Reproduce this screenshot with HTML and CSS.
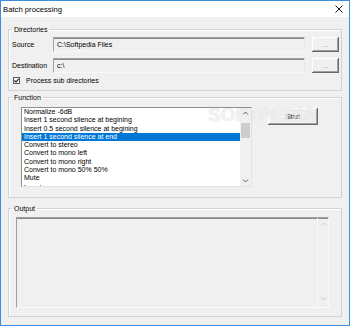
FILE: index.html
```html
<!DOCTYPE html>
<html lang="en">
<head>
    <meta charset="UTF-8">
    <title>Batch processing</title>
    <link rel="stylesheet" href="styles.css">
</head>
<body>
    <div class="window">
        <div class="titlebar">
            <span class="title">Batch processing</span>
            <svg class="close" width="8" height="8" viewBox="0 0 8 8">
                <path d="M0.5 0.5 L7.5 7.5 M7.5 0.5 L0.5 7.5" stroke="#111" stroke-width="1" fill="none"/>
            </svg>
        </div>
        <div class="client">
            <fieldset class="group">
                <legend>Directories</legend>
                <div class="dirs-body">
                    <div class="row">
                        <span class="lbl">Source</span>
                        <div class="edit">C:\Softpedia Files</div>
                        <button class="btn browse">...</button>
                    </div>
                    <div class="row">
                        <span class="lbl">Destination</span>
                        <div class="edit">c:\</div>
                        <button class="btn browse">...</button>
                    </div>
                    <div class="check-row">
                        <span class="checkbox">
                            <svg width="5" height="5" viewBox="0 0 5 5">
                                <path d="M0.5 2.5 L2 4 L4.6 0.8" stroke="#111" stroke-width="1.1" fill="none"/>
                            </svg>
                        </span>
                        <span>Process sub directories</span>
                    </div>
                </div>
            </fieldset>

            <fieldset class="group func">
                <legend>Function</legend>
                <div class="func-body">
                    <div class="watermark">SOFTPEDIA</div>
                    <div class="listbox">
                        <ul class="items">
                            <li>Normalize -6dB</li>
                            <li>Insert 1 second silence at begining</li>
                            <li>Insert 0.5 second silence at begining</li>
                            <li class="selected">Insert 1 second silence at end</li>
                            <li>Convert to stereo</li>
                            <li>Convert to mono left</li>
                            <li>Convert to mono right</li>
                            <li>Convert to mono 50% 50%</li>
                            <li>Mute</li>
                            <li class="cut">Invert</li>
                        </ul>
                        <div class="vscroll">
                            <svg class="arrow" width="11" height="11" viewBox="0 0 11 11">
                                <path d="M3 6.5 L5.5 4 L8 6.5" stroke="#606060" stroke-width="1" fill="none"/>
                            </svg>
                            <div class="thumb"></div>
                            <div class="track"></div>
                            <svg class="arrow" width="11" height="11" viewBox="0 0 11 11">
                                <path d="M3 4.5 L5.5 7 L8 4.5" stroke="#606060" stroke-width="1" fill="none"/>
                            </svg>
                        </div>
                    </div>
                    <button class="btn start">Start</button>
                </div>
            </fieldset>

            <fieldset class="group output">
                <legend>Output</legend>
                <div class="output-body">
                    <div class="memo">
                        <div class="memo-text"></div>
                        <div class="memo-scroll">
                            <svg width="11" height="11" viewBox="0 0 11 11">
                                <path d="M3 6.5 L5.5 4 L8 6.5" stroke="#c4c4c4" stroke-width="1" fill="none"/>
                            </svg>
                            <svg width="11" height="11" viewBox="0 0 11 11">
                                <path d="M3 4.5 L5.5 7 L8 4.5" stroke="#c4c4c4" stroke-width="1" fill="none"/>
                            </svg>
                        </div>
                    </div>
                </div>
            </fieldset>
        </div>
    </div>
</body>
</html>
```

FILE: styles.css
```css
*{
    box-sizing: border-box;
}
body{
    margin: 0;
    background-color: #fff;
    font-family: "Liberation Sans", Arial, sans-serif;
    font-size: 7px;
    color: #000;
}
.window{
    width: 350px;
    height: 326px;
    border: 1px solid #3d8ee0;
    display: flex;
    flex-direction: column;
    background-color: #f0f0f0;
}
.titlebar{
    height: 16px;
    background-color: #fff;
    display: flex;
    align-items: center;
    justify-content: space-between;
    padding: 0 6px 0 2px;
}
.title{
    font-size: 7.7px;
}
.client{
    flex: 1;
    padding: 8px 7px 0 7px;
}

/* group boxes */
.group{
    margin: 0;
    padding: 0;
    min-width: 0;
    border: 1px solid #d3d3d3;
    box-shadow: inset 1px 1px 0 #fff;
}
.group legend{
    margin-left: 3px;
    padding: 0 2px;
    line-height: 9px;
    font-size: 7px;
}
.func{
    margin-top: 2px;
}
.output{
    margin-top: 6px;
}

/* directories */
.dirs-body{
    padding: 3px 2px 6px 3px;
}
.row{
    display: flex;
    align-items: center;
    height: 15px;
    margin-bottom: 6px;
}
.lbl{
    width: 41px;
}
.edit{
    width: 252px;
    height: 15px;
    line-height: 13px;
    padding-left: 3px;
    border: 1px solid;
    border-color: #a0a0a0 #e8e8e8 #f8f8f8 #a0a0a0;
    box-shadow: inset 0 1px 0 #8a8a8a;
    background-color: #f0f0f0;
    white-space: nowrap;
}
.btn{
    font-family: "Liberation Sans", Arial, sans-serif;
    font-size: 7px;
    background-color: #f0f0f0;
    border: none;
    padding: 0;
    box-shadow: inset -1px -1px 0 #696969, inset 1px 1px 0 #fff, inset -2px -2px 0 #a0a0a0;
}
.browse{
    width: 27px;
    height: 15px;
    margin-left: 7px;
    color: #9a9a9a;
    line-height: 15px;
}
.check-row{
    display: flex;
    align-items: center;
    height: 8px;
    margin-top: -3px;
}
.checkbox{
    width: 7px;
    height: 7px;
    margin-left: 1px;
    margin-right: 6px;
    border: 1px solid #555;
    background-color: #fff;
    display: flex;
    align-items: center;
    justify-content: center;
}

/* function */
.func-body{
    position: relative;
    display: flex;
    align-items: flex-start;
    padding: 5px 0 10px 12px;
}
.listbox{
    width: 231px;
    height: 80px;
    display: flex;
    border: 1px solid;
    border-color: #8f8f8f #e3e3e3 #e3e3e3 #8f8f8f;
    background-color: #fff;
    overflow: hidden;
}
.items{
    flex: 1;
    margin: 0;
    padding: 0;
    list-style: none;
    overflow: hidden;
}
.items li{
    height: 8.3px;
    line-height: 8.3px;
    padding-left: 2px;
    white-space: nowrap;
}
.items .selected{
    background-color: #0078d7;
    color: #fff;
}
.items .cut{
    line-height: 9.5px;
}
.vscroll{
    width: 11px;
    display: flex;
    flex-direction: column;
    background-color: #f0f0f0;
}
.arrow{
    flex: none;
}
.thumb{
    height: 15px;
    margin: 4px 1px 0 1px;
    background-color: #cdcdcd;
}
.track{
    flex: 1;
}
.start{
    width: 50px;
    height: 17px;
    margin: 1px 0 0 16px;
    line-height: 17px;
    background-color: transparent;
}
.watermark{
    position: absolute;
    left: 199px;
    top: 3px;
    font-size: 19px;
    line-height: 19px;
    font-weight: bold;
    color: rgba(255, 255, 255, 0.7);
    text-shadow: 0 0 1px rgba(0, 0, 0, 0.18);
    pointer-events: none;
}

/* output */
.output-body{
    padding: 4px 12px 8px 7px;
}
.memo{
    width: 313px;
    height: 91px;
    display: flex;
    border: 1px solid;
    border-color: #a0a0a0 #fafafa #fafafa #a0a0a0;
    box-shadow: inset 0 1px 0 #8a8a8a;
    background-color: #f0f0f0;
}
.memo-text{
    flex: 1;
}
.memo-scroll{
    width: 11px;
    display: flex;
    flex-direction: column;
    justify-content: space-between;
    padding: 1px 0 3px 0;
    border-left: 1px solid #f8f8f8;
}
```
